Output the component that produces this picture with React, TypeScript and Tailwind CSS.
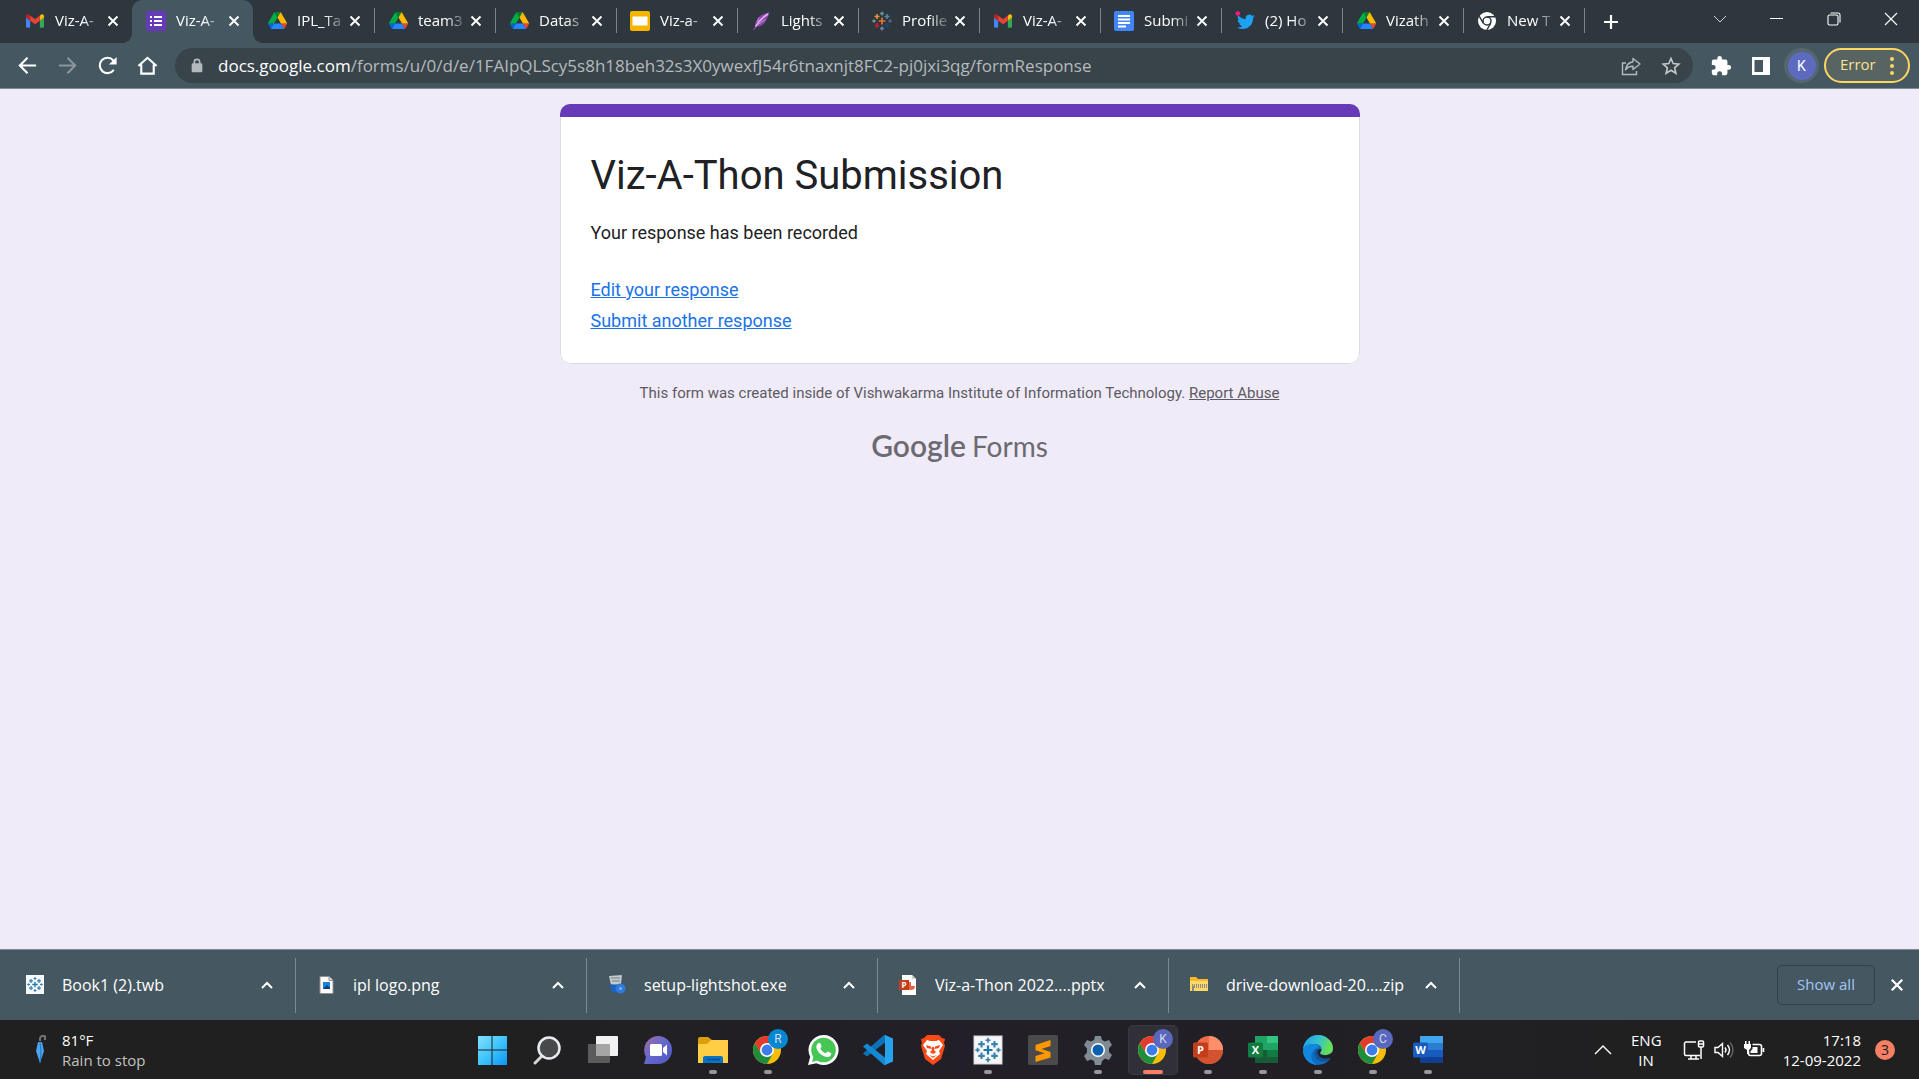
import type { ReactNode } from 'react';

const svgBase = 'block shrink-0';

function Gmail() {
  return (
    <svg viewBox="0 0 24 18" className={`${svgBase} w-[18px] h-[14px]`}>
      <path fill="#4285f4" d="M0 4v12.4C0 17.300.7 18 1.600 18H5.500V8.500z" />
      <path fill="#34a853" d="M18.500 18h3.900c.9 0 1.600-.7 1.600-1.600V4l-5.500 4.500z" />
      <path fill="#fbbc04" d="M18.500 1.600v6.900L24 4.400V2.500c0-2-2.300-3.200-3.900-2z" />
      <path fill="#ea4335" d="M5.500 8.500V1.600L12 6.500l6.500-4.900v6.900L12 13.400z" />
      <path fill="#c5221f" d="M0 2.500v1.900l5.500 4.100V1.600L3.900.5C2.300-.7 0 .5 0 2.500z" />
    </svg>
  );
}

function FormsIcon() {
  return (
    <svg viewBox="0 0 20 20" className={`${svgBase} w-5 h-5`}>
      <rect width="20" height="20" rx="2" fill="#673ab7" />
      <path fill="#fff" d="M4 5h2v2H4zM8 5h8v2H8zM4 9h2v2H4zM8 9h8v2H8zM4 13h2v2H4zM8 13h8v2H8z" />
    </svg>
  );
}

function Drive() {
  return (
    <svg viewBox="0 0 87.300 78" className={`${svgBase} w-[19px] h-[17px]`}>
      <path fill="#0066da" d="m6.600 66.850 3.850 6.650c.8 1.400 1.950 2.500 3.300 3.300l13.750-23.800h-27.500c0 1.550.4 3.100 1.200 4.500z" />
      <path fill="#00ac47" d="m43.650 25-13.750-23.800c-1.350.8-2.500 1.900-3.300 3.300l-25.400 44a9.060 9.060 0 0 0-1.200 4.500h27.500z" />
      <path fill="#ea4335" d="m73.550 76.800c1.350-.8 2.500-1.900 3.300-3.300l1.600-2.750 7.650-13.250c.8-1.400 1.200-2.950 1.200-4.500h-27.500l5.850 11.500z" />
      <path fill="#00832d" d="m43.650 25 13.750-23.800c-1.350-.8-2.900-1.200-4.500-1.200h-18.500c-1.600 0-3.150.45-4.500 1.200z" />
      <path fill="#2684fc" d="m59.800 53h-32.300l-13.750 23.800c1.350.8 2.900 1.200 4.500 1.200h50.800c1.600 0 3.150-.45 4.500-1.200z" />
      <path fill="#ffba00" d="m73.400 26.500-12.700-22c-.8-1.400-1.950-2.500-3.300-3.300l-13.750 23.800 16.150 28h27.450c0-1.550-.4-3.100-1.200-4.500z" />
    </svg>
  );
}

function Slides() {
  return (
    <svg viewBox="0 0 20 20" className={`${svgBase} w-5 h-5`}>
      <rect width="20" height="20" rx="2" fill="#f5b400" />
      <rect x="2.500" y="5.500" width="15" height="9" fill="#fff" />
    </svg>
  );
}

function Feather() {
  return (
    <svg viewBox="0 0 20 20" className={`${svgBase} w-5 h-5`}>
      <path fill="#8e44ad" d="M18.500 1C12 2.500 6 6 4.500 11.500c-.3 1.200-.3 2.500-.1 3.500L2 19l1.200.3L5.500 16c4.500-.5 8-3 10-7.500C16.800 5.500 18.300 3.500 18.500 1z" />
      <path fill="none" stroke="#e3b9f2" strokeWidth="1.500" d="M17 3C12 6 8 10 4.500 15.500" />
      <path fill="none" stroke="#c58be0" strokeWidth="1" d="M14.500 8.500 7 13.500M8 6.500 6.500 11" />
    </svg>
  );
}

function Plus({ x, y, r, w, c }: { x: number; y: number; r: number; w: number; c: string }) {
  return <path stroke={c} strokeWidth={w} fill="none" d={`M${x - r} ${y}h${r * 2}M${x} ${y - r}v${r * 2}`} />;
}

function TableauMark({ mono }: { mono?: boolean }) {
  const c = (v: string) => (mono ? '#3a82ab' : v);
  return (
    <>
      <Plus x={10} y={10} r={3.400} w={1.700} c={mono ? '#1f77a8' : '#e8762d'} />
      <Plus x={5} y={5.500} r={2.500} w={1.600} c={c('#eb912c')} />
      <Plus x={15} y={5.500} r={2.500} w={1.600} c={c('#59879b')} />
      <Plus x={5} y={14.500} r={2.500} w={1.600} c={c('#c72035')} />
      <Plus x={15} y={14.500} r={2.500} w={1.600} c={c('#1f447e')} />
      <Plus x={10} y={2.500} r={1.900} w={1.300} c={c('#7199a6')} />
      <Plus x={10} y={17.500} r={1.900} w={1.300} c={c('#7d84b5')} />
      <Plus x={2} y={10} r={1.700} w={1.300} c={c('#7199a6')} />
      <Plus x={18} y={10} r={1.700} w={1.300} c={c('#5b6591')} />
    </>
  );
}

function TableauIcon() {
  return (
    <svg viewBox="0 0 20 20" className={`${svgBase} w-5 h-5`}>
      <TableauMark />
    </svg>
  );
}

function Docs() {
  return (
    <svg viewBox="0 0 20 20" className={`${svgBase} w-5 h-5`}>
      <rect width="20" height="20" rx="2" fill="#4285f4" />
      <path fill="#fff" d="M4 4h12v2H4zM4 7.500h12v2H4zM4 11h12v2H4zM4 14.500h8v2H4z" />
    </svg>
  );
}

function Twitter() {
  return (
    <svg viewBox="0 0 20 20" className={`${svgBase} w-5 h-5`}>
      <path
        transform="translate(2 2) scale(.74)"
        fill="#1da1f2"
        d="M23.950 4.570a10 10 0 0 1-2.820.77 4.960 4.960 0 0 0 2.160-2.720c-.95.55-2 .95-3.130 1.180a4.920 4.920 0 0 0-8.380 4.480C7.690 8.090 4.070 6.130 1.640 3.160a4.820 4.820 0 0 0-.67 2.480c0 1.710.87 3.210 2.190 4.100a4.900 4.900 0 0 1-2.230-.62v.06a4.920 4.920 0 0 0 3.950 4.830 5 5 0 0 1-2.210.08 4.940 4.940 0 0 0 4.600 3.420A9.870 9.870 0 0 1 0 19.540a14 14 0 0 0 7.550 2.210c9.050 0 14-7.500 14-13.980 0-.21 0-.42-.02-.63a9.940 9.940 0 0 0 2.460-2.550z"
      />
      <circle cx="2.800" cy="2.500" r="2.300" fill="#f91880" />
    </svg>
  );
}

function ChromeMono() {
  return (
    <svg viewBox="0 0 20 20" className={`${svgBase} w-5 h-5`}>
      <circle cx="10" cy="10" r="9" fill="#fff" />
      <circle cx="10" cy="10" r="4" fill="#fff" stroke="#2d373d" strokeWidth="1.500" />
      <path stroke="#2d373d" strokeWidth="1.400" d="M10 5.700h8M6.200 12.200 2.300 5.400M13.800 12.200l-4 6.800" />
    </svg>
  );
}

function CloseX({ className }: { className: string }) {
  return (
    <svg viewBox="0 0 12 12" className={`${svgBase} ${className}`}>
      <path d="M1.500 1.500l9 9M10.500 1.500l-9 9" stroke="currentColor" strokeWidth="1.900" fill="none" />
    </svg>
  );
}

const tabs: { icon: ReactNode; title: string; active?: boolean; sep?: boolean }[] = [
  { icon: <Gmail />, title: 'Viz-A-' },
  { icon: <FormsIcon />, title: 'Viz-A-', active: true },
  { icon: <Drive />, title: 'IPL_Ta', sep: true },
  { icon: <Drive />, title: 'team3', sep: true },
  { icon: <Drive />, title: 'Datas', sep: true },
  { icon: <Slides />, title: 'Viz-a-', sep: true },
  { icon: <Feather />, title: 'Lights', sep: true },
  { icon: <TableauIcon />, title: 'Profile', sep: true },
  { icon: <Gmail />, title: 'Viz-A-', sep: true },
  { icon: <Docs />, title: 'Submi', sep: true },
  { icon: <Twitter />, title: '(2) Ho', sep: true },
  { icon: <Drive />, title: 'Vizath', sep: true },
  { icon: <ChromeMono />, title: 'New T', sep: true },
];

function TabStrip() {
  return (
    <header className="flex h-[43px] shrink-0 items-stretch bg-[#2d373d] pl-[11px] text-white">
      {tabs.map((t, i) => (
        <div
          key={i}
          className={`relative flex w-[121px] shrink-0 items-center pb-0.5 pl-3.5 ${t.active ? 'rounded-t-[10px] bg-[#455760]' : ''}`}
        >
          {t.active && (
            <>
              <span className="absolute bottom-0 -left-2.5 size-2.5 bg-[radial-gradient(circle_at_0_0,transparent_10px,#455760_10px)]" />
              <span className="absolute bottom-0 -right-2.5 size-2.5 bg-[radial-gradient(circle_at_100%_0,transparent_10px,#455760_10px)]" />
            </>
          )}
          <span className="flex w-5 justify-center">{t.icon}</span>
          <span className="ml-2.5 w-[50px] text-[15px] whitespace-nowrap [mask-image:linear-gradient(to_right,black_55%,transparent_100%)]">
            {t.title}
          </span>
          <button aria-label={`Close ${t.title}`} className="flex size-4 items-center justify-center">
            <CloseX className="size-3" />
          </button>
          {t.sep && <span className="absolute -right-px h-[25px] w-px bg-[#7b858a]" />}
        </div>
      ))}
      <button aria-label="New tab" className="ml-[15px] flex w-6 items-center justify-center">
        <svg viewBox="0 0 16 16" className="size-4">
          <path d="M8 1v14M1 8h14" stroke="#fff" strokeWidth="2.200" />
        </svg>
      </button>
      <div className="ml-auto flex h-[37px]">
        <button aria-label="Search tabs" className="flex w-[57px] items-center justify-center">
          <svg viewBox="0 0 14 8" className="h-2 w-3.5"><path d="M1 1l6 6 6-6" fill="none" stroke="#d5d8da" /></svg>
        </button>
        <button aria-label="Minimize" className="flex w-[57px] items-center justify-center">
          <span className="h-px w-[13px] bg-white" />
        </button>
        <button aria-label="Restore" className="flex w-[57px] items-center justify-center">
          <svg viewBox="0 0 14 14" className="size-3.5" fill="none" stroke="#fff" strokeWidth="1.100">
            <rect x="1" y="3" width="10" height="10" rx="1.500" />
            <path d="M3.500 1H11a2 2 0 0 1 2 2v7.500" />
          </svg>
        </button>
        <button aria-label="Close window" className="flex w-[57px] items-center justify-center">
          <svg viewBox="0 0 14 14" className="size-3.5"><path d="M1 1l12 12M13 1L1 13" stroke="#fff" strokeWidth="1.100" /></svg>
        </button>
      </div>
    </header>
  );
}

function NavButton({ label, children }: { label: string; children: ReactNode }) {
  return (
    <button aria-label={label} className="flex h-8 w-10 items-center justify-center text-white">
      <svg viewBox="0 0 24 24" className="size-[23px]" fill="none" stroke="currentColor" strokeWidth="2.200">
        {children}
      </svg>
    </button>
  );
}

function Toolbar() {
  return (
    <nav className="flex h-[46px] shrink-0 items-center border-b border-[#7d8a91] bg-[#455760] pr-[9px] pl-[7px]">
      <NavButton label="Back"><path d="M21 12H4M12 4l-8 8 8 8" /></NavButton>
      <NavButton label="Forward"><path stroke="#8b969b" d="M3 12h17M12 4l8 8-8 8" /></NavButton>
      <NavButton label="Reload">
        <path d="M18.500 16.500A8 8 0 1 1 18 6.700l1 1" />
        <path fill="#fff" stroke="none" d="M21.500 3v8h-8z" />
      </NavButton>
      <NavButton label="Home"><path d="M2.500 12.500 12 4l9.500 8.500M5.500 11v9.500h13V11" /></NavButton>
      <div className="ml-2 flex h-[35px] flex-1 items-center rounded-full bg-[#39444a] pr-0.5 pl-[15px]">
        <svg viewBox="0 0 14 18" className="h-4 w-3.5">
          <rect x="1" y="6" width="12" height="10" rx="1.500" fill="#b3b9bc" />
          <path d="M4 7V4.500a3 3 0 0 1 6 0V7" fill="none" stroke="#b3b9bc" strokeWidth="1.800" />
        </svg>
        <p className="ml-3.5 flex-1 text-[17px] text-[#b4babd]">
          <span className="text-white">docs.google.com</span>/forms/u/0/d/e/1FAIpQLScy5s8h18beh32s3X0ywexfJ54r6tnaxnjt8FC2-pj0jxi3qg/formResponse
        </p>
        <button aria-label="Share" className="flex w-10 justify-center">
          <svg viewBox="0 0 20 20" className="size-5" fill="none" stroke="#b4babd" strokeWidth="1.400">
            <path d="M5 7H1.500v11.500h14V15" />
            <path strokeLinejoin="round" d="M12 2.500 19 8l-7 5.500v-3.200C8.500 10.300 6 11.500 4.500 14c.5-4.500 3-7.500 7.500-8.300z" />
          </svg>
        </button>
        <button aria-label="Bookmark" className="flex w-10 justify-center">
          <svg viewBox="0 0 20 20" className="size-5" fill="none" stroke="#c3c8ca" strokeWidth="1.600">
            <path d="m10 2.500 2.200 5.100 5.600.5-4.200 3.700 1.300 5.500-4.900-3-4.900 3 1.300-5.500-4.200-3.700 5.600-.5z" />
          </svg>
        </button>
      </div>
      <button aria-label="Extensions" className="ml-2 flex w-10 justify-center">
        <svg viewBox="0 0 24 24" className="size-[22px]" fill="#fff">
          <path d="M20.500 11H19V7a2 2 0 0 0-2-2h-4V3.500a2.500 2.500 0 0 0-5 0V5H4a2 2 0 0 0-2 2v3.800h1.500a2.700 2.700 0 0 1 0 5.400H2V20a2 2 0 0 0 2 2h3.800v-1.500a2.700 2.700 0 0 1 5.400 0V22H17a2 2 0 0 0 2-2v-4h1.500a2.500 2.500 0 0 0 0-5z" />
        </svg>
      </button>
      <button aria-label="Side panel" className="flex w-10 justify-center">
        <svg viewBox="0 0 18 18" className="size-[18px]">
          <path fill="#fff" fillRule="evenodd" d="M0 0h18v18H0zM2.500 3v12H11V3z" />
        </svg>
      </button>
      <button aria-label="Profile" className="ml-[3px] flex size-[35px] items-center justify-center rounded-full bg-[#56666e]">
        <span className="flex size-7 items-center justify-center rounded-full bg-[#5c6bc0] font-[Roboto,sans-serif] text-sm text-white">K</span>
      </button>
      <button className="ml-[5px] flex h-[35px] w-[86px] items-center justify-between rounded-full border-2 border-[#fdd663] bg-[#576462] pr-3.5 pb-0.5 pl-3.5 text-[15px] text-[#fde293]">
        Error
        <svg viewBox="0 0 4 18" className="mt-0.5 h-[18px] w-1" fill="#fdd663">
          <circle cx="2" cy="2" r="2" /><circle cx="2" cy="9" r="2" /><circle cx="2" cy="16" r="2" />
        </svg>
      </button>
    </nav>
  );
}

function FormPage() {
  return (
    <main className="flex-1 bg-[#f0ebf8] px-4 pt-[15px] font-[Roboto,sans-serif]">
      <section className="mx-auto max-w-[800px] overflow-hidden rounded-[10px] bg-white">
        <div className="h-[13px] bg-[#673ab7]" />
        <div className="rounded-b-[10px] border border-t-0 border-[#dadce0] px-[30px] pt-[34px] pb-[30px] text-lg text-[#202124]">
          <h1 className="text-[40px] leading-[50px]">Viz-A-Thon Submission</h1>
          <p className="mt-5 leading-6">Your response has been recorded</p>
          <div className="mt-[33px] flex flex-col items-start gap-[7px] leading-6 text-[#1a73e8]">
            <a href="#edit" className="underline">Edit your response</a>
            <a href="#again" className="underline">Submit another response</a>
          </div>
        </div>
      </section>
      <p className="mt-[19px] text-center text-[15px] leading-5 text-[#5c5a62]">
        This form was created inside of Vishwakarma Institute of Information Technology.{' '}
        <a href="#abuse" className="underline">Report Abuse</a>
      </p>
      <a href="#forms" className="mt-6 flex items-baseline justify-center gap-1.5 font-[Lato,sans-serif] leading-9 text-[#6c6a71]">
        <span className="text-[30px] font-semibold">Google</span>
        <span className="text-[28px]">Forms</span>
      </a>
    </main>
  );
}

const downloads: { name: string; icon: ReactNode }[] = [
  {
    name: 'Book1 (2).twb',
    icon: <><rect x="1" y="0" width="18" height="19" fill="#f6f8f9" /><g transform="translate(2 1.500) scale(.8)"><TableauMark mono /></g></>,
  },
  {
    name: 'ipl logo.png',
    icon: <><path d="M4 1.500h9l4 4v13H4z" fill="#fff" stroke="#8f8f8f" /><path d="M13 1.500v4h4" fill="#ddd" stroke="#8f8f8f" /><rect x="7" y="7" width="7" height="7" fill="#1b84d8" /><path d="m7 14 4-4 3 3v1z" fill="#0b3f7c" /></>,
  },
  {
    name: 'setup-lightshot.exe',
    icon: <><path d="m2 1 13-1-1 9-10 1z" fill="#c3c9cd" /><path d="M4 3h9M5 6h8" stroke="#75818a" /><path d="m3 9 7 1 3 8-9-2z" fill="#1c62c4" /><circle cx="13.500" cy="13.500" r="5" fill="#2e7be0" /><circle cx="13.500" cy="13.500" r="1.500" fill="#7fb0f0" /></>,
  },
  {
    name: 'Viz-a-Thon 2022....pptx',
    icon: <><path d="M4 0h10l4 4v16H4z" fill="#fff" /><path d="M14 0v4h4" fill="#ccc" /><path d="M13 7v4h4a4 4 0 1 1-4-4z" fill="#e8643f" /><rect x="1" y="5" width="10" height="10" fill="#c43e1c" /><text x="6" y="13" textAnchor="middle" fontSize="8" fontWeight="700" fill="#fff">P</text></>,
  },
  {
    name: 'drive-download-20....zip',
    icon: <><path d="M1 2h6l2 2h10v12H1z" fill="#f7b928" /><path d="M1 6h18v10H1z" fill="#ffd968" /><path d="M3 10h16M3 12h16" stroke="#8d8a80" strokeDasharray="1 1" strokeWidth="2" /><path d="M4 11v5" stroke="#8d8a80" strokeWidth="2" /></>,
  },
];

function DownloadBar() {
  return (
    <section aria-label="Downloads" className="flex h-[71px] shrink-0 items-center border-t border-[#7d8a91] bg-[#455760] pr-3 pl-[5px] text-white">
      {downloads.map((d) => (
        <div key={d.name} className="flex h-[55px] w-[291px] items-center border-r border-[#7c8990] pr-[18px] pl-5">
          <svg viewBox="0 0 20 20" className={`${svgBase} size-5`}>{d.icon}</svg>
          <span className="ml-[17px] flex-1 text-[16px] whitespace-nowrap">{d.name}</span>
          <button aria-label={`Options for ${d.name}`} className="flex size-5 items-center justify-center">
            <svg viewBox="0 0 12 8" className="h-2 w-3"><path d="M1 7l5-5 5 5" fill="none" stroke="#fff" strokeWidth="2" /></svg>
          </button>
        </div>
      ))}
      <button className="ml-auto h-10 w-[98px] rounded-[5px] border border-[#33414a] pb-0.5 text-[15px] font-medium text-[#a2c5f9]">Show all</button>
      <button aria-label="Close downloads" className="ml-3 flex size-5 items-center justify-center"><CloseX className="size-3.5" /></button>
    </section>
  );
}

function Chrome({ letter, color }: { letter: string; color: string }) {
  return (
    <>
      <circle cx="14" cy="15" r="14" fill="#fbbc04" />
      <path d="M1.900 8A14 14 0 0 0 14 29l6-10.500L14 15 8 18.500z" fill="#1e8e3e" />
      <path d="M1.900 8A14 14 0 0 1 26.100 8H14L8 18.500z" fill="#e33b2e" />
      <circle cx="14" cy="15" r="7" fill="#fff" />
      <circle cx="14" cy="15" r="5.400" fill="#3b7ded" />
      <circle cx="25" cy="4" r="10" fill={color} />
      <text x="25" y="8" textAnchor="middle" fontSize="12" fontFamily="Roboto" fill="#d4d9ee">{letter}</text>
    </>
  );
}

function OfficeBadge({ letter, color }: { letter: string; color: string }) {
  return (
    <>
      <rect x="0" y="7.500" width="15" height="15" rx="1.500" fill={color} />
      <text x="7.500" y="19" textAnchor="middle" fontSize="11" fontWeight="700" fill="#fff">{letter}</text>
    </>
  );
}

type App = { label: string; running?: boolean; active?: boolean; art: ReactNode };

const apps: App[] = [
  {
    label: 'Start',
    art: <><defs><linearGradient id="win" x1="0" y1="0" x2="1" y2="1"><stop offset="0" stopColor="#84dffd" /><stop offset=".5" stopColor="#3fc5fb" /><stop offset="1" stopColor="#0a96f5" /></linearGradient></defs><path fill="url(#win)" d="M0 1h13.500v13.500H0zM14.500 1H29v13.500H14.500zM0 15.500h13.500V30H0zM14.500 15.500H29V30H14.500z" /></>,
  },
  {
    label: 'Search',
    art: <><path d="M9.500 20.500 2 28" stroke="#d3d8da" strokeWidth="3" strokeLinecap="round" /><circle cx="16" cy="13" r="10.500" fill="#48494b" stroke="#e8ecee" strokeWidth="2.500" /></>,
  },
  {
    label: 'Task view',
    art: <><rect x="8" y="1" width="22" height="20" rx="1" fill="#f1f1f1" /><rect x="0" y="9" width="22" height="19" rx="1" fill="#5b5b5b" /><path d="M8 9h14v12H8z" fill="#a5a5a5" /></>,
  },
  {
    label: 'Chat',
    art: <><defs><linearGradient id="chat" x1="0" y1="0" x2="1" y2="1"><stop offset="0" stopColor="#a66aa5" /><stop offset=".45" stopColor="#6768cb" /><stop offset="1" stopColor="#4e57c4" /></linearGradient></defs><path fill="url(#chat)" d="M15 1a14 14 0 1 1 0 28H1l2-7A14 14 0 0 1 15 1z" /><rect x="7" y="9" width="12" height="12" rx="1.500" fill="#fff" /><path d="m20 13 4-3.500v11L20 17z" fill="#fff" /></>,
  },
  {
    label: 'File Explorer', running: true,
    art: <><path d="M0 4q0-2 2-2h8l4 3h15v6H0z" fill="#dd9f09" /><path d="M0 9h9l4-4h17v23H0z" fill="#ffce45" /><path d="M5 28v-5q0-2 2-2h16q2 0 2 2v5z" fill="#0873c4" /><path d="M9 24.500h13" stroke="#08508e" strokeWidth="1.500" /></>,
  },
  { label: 'Chrome R', running: true, art: <Chrome letter="R" color="#0588d1" /> },
  {
    label: 'WhatsApp',
    art: <><path d="M15.500 0a15 15 0 1 1-7 28.200L0 30l2.200-8A15 15 0 0 1 15.500 0z" fill="#fff" /><circle cx="15.500" cy="15" r="12.300" fill="#45c655" /><path d="M4 27l2-7 5 5z" fill="#45c655" /><path d="M10 8.500c.8-1 2-.9 2.400 0l1.200 2.800c.2.600-1.300 1.900-1.300 2.300 1.300 2.400 3 3.800 5.400 4.700.600 0 1.600-1.900 2.200-1.700l3 1.500c1 .6-.3 3.100-1.800 3.700-1.600.6-3.400.2-6.300-1.300-2.800-1.500-5.200-4.200-6.100-6.600-.8-2-.2-4.300 1.300-5.400z" fill="#fff" /></>,
  },
  {
    label: 'Visual Studio Code',
    art: <><path d="M22 7.500 4 21.500 0 18.500 21 0h2z" fill="#0b71b8" /><path d="M22 22.500 4 8.500 0 11.500 21 30h2z" fill="#1488d2" /><path d="m22 0 8 3.500v23L22 30z" fill="#26a3ee" /></>,
  },
  {
    label: 'Brave',
    art: <><path d="M9 0h12l3 3 3 1-1 4 1 3-4 13-8 6-8-6L3 11l1-3-1-4 3-1z" fill="#fb4a16" /><path d="m9 5 3 1h6l3-1 4 5-4 6 1 3-7 6-7-6 1-3-4-6z" fill="#fff" /><path d="m8 10 5 1.500.5 2.500-4.500-1zM22 10l-5 1.500-.5 2.500 4.500-1zM14 12h2l.5 4 2 1-3.500 2-3.500-2 2-1zM11 20l4 1.500 4-1.500-4 3z" fill="#fb4a16" /></>,
  },
  {
    label: 'Tableau', running: true,
    art: <><rect x="1" y="1" width="28" height="28" fill="#f5f6f7" stroke="#d8d8d8" /><g transform="translate(2 2) scale(1.300)"><TableauMark mono /></g></>,
  },
  {
    label: 'Sublime Text',
    art: <><rect width="30" height="30" rx="1.500" fill="#4a4a4a" /><path d="m7.500 10 15-5v6l-9 3 9 3v5.500l-15 4.500v-6l9-2.800-9-3z" fill="#ff9800" /></>,
  },
  {
    label: 'Settings', running: true,
    art: <><path d="M12 1h6l1 4 3 1.600 4-1.600 3 5-3 3v4l3 3-3 5-4-1.500L19 26l-1 4h-6l-1-4-3-1.500L4 26l-3-5 3-3.500v-4L1 10l3-5 4 1.500L11 5z" fill="#808b93" /><circle cx="15" cy="15" r="7" fill="#fff" /><circle cx="15" cy="15" r="5.500" fill="#0c5fae" /></>,
  },
  { label: 'Chrome K', running: true, active: true, art: <Chrome letter="K" color="#5967bd" /> },
  {
    label: 'PowerPoint', running: true,
    art: <><circle cx="16" cy="15" r="14" fill="#ed6c47" /><path d="M16 1a14 14 0 0 1 14 14H16z" fill="#ff8f6b" /><path d="M2 15h28a14 14 0 0 1-28 0z" fill="#d35230" /><OfficeBadge letter="P" color="#c43e1c" /></>,
  },
  {
    label: 'Excel', running: true,
    art: <><path d="M7 1h12v14H7z" fill="#21a366" /><path d="M19 1h11v7H19z" fill="#33c481" /><path d="M19 8h11v7H19z" fill="#21a366" /><path d="M7 15h12v7H7z" fill="#185c37" /><path d="M19 15h11v7H19z" fill="#107c41" /><path d="M7 22h23v6H7z" fill="#185c37" /><OfficeBadge letter="X" color="#107c41" /></>,
  },
  {
    label: 'Edge', running: true,
    art: <><defs><linearGradient id="edge" x1="0" y1="0" x2="1" y2=".3"><stop offset="0" stopColor="#1b9de2" /><stop offset=".55" stopColor="#35c1d1" /><stop offset="1" stopColor="#66e24f" /></linearGradient></defs><circle cx="15" cy="15" r="15" fill="#0f6cc0" /><path d="M0 14C1 6 7 0 15 0s15 6 15 13c0 5-4 7-8 7-3 0-5-1-5-2s1.500-1.500 1.500-4c0-3-3-5-7-5C6 9 2 11 0 14z" fill="url(#edge)" /><path d="M11 9C5 9 0 11 0 15.500 0 24 7 30 15 30c-6-2-8-8-6-12 1-3 3-4 6-5 1-2-1-4-4-4z" fill="#1187de" /><path d="M15 13c-4 2-5 8 0 12 5 3 10 1 13-2-2 1-6 1-8-1-3-1-5-3-5-5z" fill="#12539c" /><path d="M18.500 14c0 2.500-1.500 3-1.500 4s2 2.500 6 2.200c3-.2 5-1.700 7-3.700v4l-2 2.500c-4 1-9 1-12-2-2-2-2-5 0-7z" fill="#212026" /></>,
  },
  { label: 'Chrome C', running: true, art: <Chrome letter="C" color="#5967bd" /> },
  {
    label: 'Word', running: true,
    art: <><path d="M7 1h23v7H7z" fill="#41a5ee" /><path d="M7 8h23v7H7z" fill="#2b7cd3" /><path d="M7 15h23v7H7z" fill="#185abd" /><path d="M7 22h23v6H7z" fill="#103f91" /><OfficeBadge letter="W" color="#185abd" /></>,
  },
];

function Taskbar() {
  return (
    <footer className="flex h-[59px] shrink-0 items-center justify-between bg-[linear-gradient(to_right,#202020_25%,#221f28_50%,#202020_90%)] text-white">
      <button className="flex w-[467px] items-center pl-[30px] text-left text-[15px] leading-5">
        <svg viewBox="0 0 20 30" className="h-[30px] w-5">
          <path d="M10 6V4a3 3 0 0 1 5-2.500V5" fill="none" stroke="#70777c" strokeWidth="2" />
          <path d="M8 7h4l2 9-4 12-4-12z" fill="#4da3ee" />
          <path d="M10 7l1 9-1 12" stroke="#2479c8" fill="none" />
        </svg>
        <span className="ml-3">
          <span className="block">81°F</span>
          <span className="block text-[#c3c3c3]">Rain to stop</span>
        </span>
      </button>
      <div className="flex h-full items-center gap-[5px]">
        {apps.map((a) => (
          <button
            key={a.label}
            aria-label={a.label}
            className={`relative flex size-[50px] items-center justify-center rounded-[5px] ${a.active ? 'bg-[#312f38] ring-1 ring-[#3a3841] ring-inset' : ''}`}
          >
            <svg viewBox="0 0 30 30" className="size-[30px] overflow-visible">{a.art}</svg>
            {a.running && (
              <span className={`absolute bottom-px h-1 rounded-full ${a.active ? 'w-5 bg-[#f77f64]' : 'w-2 bg-[#98979b]'}`} />
            )}
          </button>
        ))}
      </div>
      <div className="flex w-[465px] items-center justify-end pr-6 text-[15px] leading-5">
        <button aria-label="Hidden icons" className="flex w-8 justify-center">
          <svg viewBox="0 0 18 10" className="h-2.5 w-[18px]"><path d="M1 9l8-8 8 8" fill="none" stroke="#fff" strokeWidth="1.400" /></svg>
        </button>
        <button className="ml-3 w-[30px] text-center whitespace-nowrap">ENG<br />IN</button>
        <button aria-label="Network, volume and battery" className="ml-[22px] flex items-center gap-2">
          <svg viewBox="0 0 22 22" className="size-[22px]" fill="none" stroke="#fff" strokeWidth="1.500">
            <path d="M13 3H3a1.500 1.500 0 0 0-1.500 1.500V15A1.500 1.500 0 0 0 3 16.500h14M5 20h11M8 16.500V20M13 16.500V20" />
            <rect x="15.500" y="2" width="5" height="6" rx="1" />
            <path d="M18 8v12M15.500 5h5" />
          </svg>
          <svg viewBox="0 0 22 22" className="size-[22px]" fill="none" stroke="#fff" strokeWidth="1.400">
            <path d="M2 8.500h3L9.500 4.500v13L5 13.500H2zM12 8.500q2 2.500 0 5M14.500 6q4 5 0 10" />
            <path stroke="#66656a" d="M17 3.500q6 7.500 0 15" />
          </svg>
          <svg viewBox="0 0 22 22" className="size-[22px]" fill="none" stroke="#fff" strokeWidth="1.600">
            <path d="M9.500 5.500h7a2 2 0 0 1 2 2v7a2 2 0 0 1-2 2h-9q-2 0-2-2V12M20.500 9v4" />
            <path fill="#fff" stroke="none" d="M1 5h7v4l-2 2v4H4v-4L1 9zM2 2h1.500v3H2zM5.500 2H7v3H5.500zM9.500 8h5v6h-7v-2l2-2z" />
          </svg>
        </button>
        <button className="ml-4 w-[80px] text-right whitespace-nowrap">17:18<br />12-09-2022</button>
        <span className="ml-3.5 flex size-5 items-center justify-center rounded-full bg-[#f77f64] text-sm text-[#20201f]">3</span>
      </div>
    </footer>
  );
}

export default function App() {
  return (
    <div className="flex h-screen flex-col overflow-hidden font-['Open_Sans','Noto_Sans',sans-serif]">
      <TabStrip />
      <Toolbar />
      <FormPage />
      <DownloadBar />
      <Taskbar />
    </div>
  );
}
